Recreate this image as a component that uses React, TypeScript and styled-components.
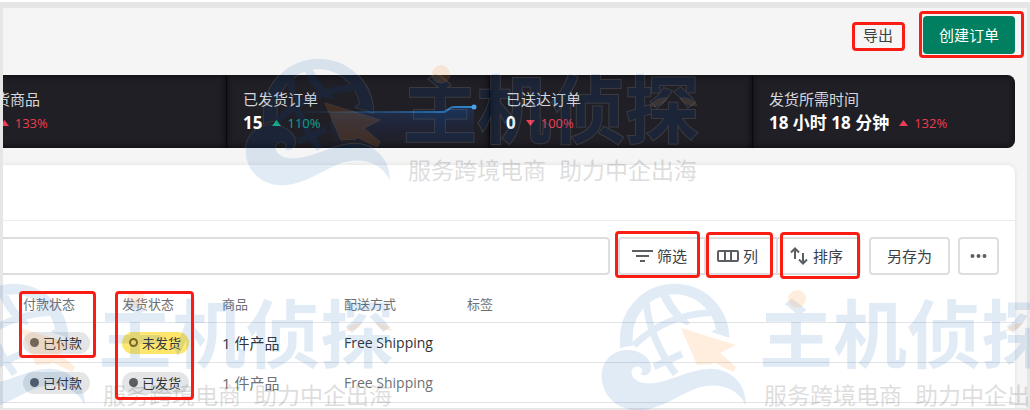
import React from "react";
import styled, { createGlobalStyle } from "styled-components";

const GlobalStyle = createGlobalStyle`
  *, *::before, *::after { box-sizing: border-box; }
  body {
    margin: 0;
    background: #fff;
    color: #3c4043;
    font: 15px/20px "Open Sans", "Noto Sans CJK SC", sans-serif;
  }
  button, input { font: inherit; color: inherit; }
`;

const Page = styled.div`
  position: relative;
  padding-top: 2px;
  overflow: hidden;
`;

const Frame = styled.main`
  border: solid #e6e6e6;
  border-width: 6px 3px 2px;
  padding: 0 12px 0 0;
  background: #f5f5f5;
  overflow: hidden;
`;

const Header = styled.header`
  display: flex;
  justify-content: flex-end;
  align-items: center;
  gap: 16px;
  height: 67px;
  padding-bottom: 13px;
`;

const Marked = styled.div`
  position: relative;
  display: flex;
`;

const Mark = styled.span<{ $inset: string }>`
  position: absolute;
  z-index: 2;
  inset: ${(p) => p.$inset};
  border: 3px solid #fb1d14;
  border-radius: 4px;
  pointer-events: none;
`;

const PlainButton = styled.button`
  height: 38px;
  padding: 0 14px;
  border: 0;
  background: none;
`;

const PrimaryButton = styled.button`
  height: 38px;
  padding: 0 16px;
  border: 0;
  border-radius: 4px;
  background: #008060;
  color: #fff;
`;

const Stats = styled.section`
  display: flex;
  margin-left: -40px;
  height: 73px;
  border-radius: 8px;
  background: #201f26;
  overflow: hidden;
`;

const Stat = styled.div`
  position: relative;
  flex: 1;
  padding: 14px 0 0 17px;
  box-shadow: inset 0 0 7px #08080b, inset 1px 0 0 #0c0c10;
  color: #d6d6da;
  white-space: nowrap;
`;

const StatLine = styled.div`
  display: flex;
  align-items: center;
  height: 28px;
`;

const StatValue = styled.strong`
  font-size: 17px;
  color: #fff;
`;

const Change = styled.span<{ $tone: string }>`
  display: flex;
  align-items: center;
  gap: 6px;
  margin-left: 10px;
  font-size: 13px;
  color: ${(p) => p.$tone};
`;

const Spark = styled.svg`
  position: absolute;
  right: 8px;
  top: 26px;
`;

const Card = styled.section`
  margin-top: 17px;
  border-radius: 0 8px 0 0;
  background: #fff;
  box-shadow: 0 0 4px rgba(0, 0, 0, 0.1);
`;

const Tabs = styled.div`
  height: 56px;
  border-bottom: 1px solid #ececee;
`;

const Toolbar = styled.div`
  display: flex;
  gap: 8px;
  padding: 16px 16px 11px 0;
`;

const Search = styled.input`
  flex: 1;
  min-width: 0;
  height: 38px;
  margin-left: -4px;
  padding: 0 12px;
  border: 2px solid #dcdee0;
  border-radius: 4px;
  background: #fff;
`;

const Group = styled.div`
  display: flex;
  border: 2px solid #dcdee0;
  border-radius: 4px;
`;

const Segment = styled.button<{ $pad: string }>`
  display: flex;
  align-items: center;
  gap: 4px;
  height: 34px;
  padding: ${(p) => p.$pad};
  border: 0;
  background: none;
`;

const Divided = styled(Marked)`
  border-left: 2px solid #dcdee0;
`;

const Outline = styled.button<{ $pad: number }>`
  display: flex;
  align-items: center;
  height: 38px;
  padding: 0 ${(p) => p.$pad}px;
  border: 2px solid #dcdee0;
  border-radius: 4px;
  background: #fff;
`;

const Table = styled.table`
  width: 100%;
  table-layout: fixed;
  border-collapse: separate;
  border-spacing: 0;
  padding-bottom: 5px;
`;

const Head = styled.th<{ $w?: number }>`
  position: relative;
  width: ${(p) => (p.$w ? `${p.$w}px` : "auto")};
  height: 36px;
  padding: 0;
  font-size: 13px;
  font-weight: 400;
  text-align: left;
  color: #6d7175;
  &:first-child { padding-left: 20px; }
`;

const Row = styled.tr<{ $read?: boolean }>`
  color: ${(p) => (p.$read ? "#6d7175" : "#2f3337")};
`;

const Cell = styled.td`
  height: 40px;
  padding: 0;
  border-top: 1px solid #e1e3e5;
  &:first-child { padding-left: 20px; }
`;

const MethodCell = styled(Cell)`
  font-size: 14px;
`;

const LastLine = styled(Cell)`
  height: 1px;
`;

const Badge = styled.span<{ $warn?: boolean }>`
  display: inline-flex;
  align-items: center;
  gap: 4px;
  height: 22px;
  padding: 0 8px 0 7px;
  border-radius: 11px;
  background: ${(p) => (p.$warn ? "#ffe66b" : "#e4e5e7")};
  font-size: 13px;
  color: #303336;
  vertical-align: middle;
  &::before {
    content: "";
    width: 9px;
    height: 9px;
    border: ${(p) => (p.$warn ? "2px solid #8a6a10" : "0")};
    border-radius: 50%;
    background: ${(p) => (p.$warn ? "none" : "#5c5f62")};
  }
`;

const Stamp = styled.svg<{ $x: number; $y: number }>`
  position: absolute;
  z-index: 1;
  left: ${(p) => p.$x}px;
  top: ${(p) => p.$y}px;
  pointer-events: none;
`;

const Caption = styled.text`
  font: 400 23px "Noto Sans CJK SC", sans-serif;
`;

const Wordmark = styled.text`
  font: 700 74px "Noto Sans CJK SC", sans-serif;
`;

function Watermark({ x, y }: { x: number; y: number }) {
  return (
    <Stamp $x={x} $y={y} width="480" height="135" viewBox="0 0 480 135" aria-hidden="true">
      <g opacity="0.115" fill="#0056b8" stroke="#fff" strokeWidth="2" paintOrder="stroke">
        <svg width="155" height="135" viewBox="18 30 465 405">
          <g strokeWidth="5" paintOrder="stroke">
            <path d="M90 235V207A164 164 0 0 1 418 203L365 186Q368 180 378 178A126 126 0 0 0 128 207V228Q106 228 90 235Z" />
            <g fill="none" stroke="#0056b8">
              <path d="M132 226Q225 135 362 128" strokeWidth="20" />
              <path d="M168 94Q178 205 257 312" strokeWidth="21" />
              <path d="M192 290L276 252" strokeWidth="21" />
            </g>
            <path d="M210 76H238Q260 122 300 158L292 166L262 152Q228 120 210 76Z" stroke="none" />
            <path d="M108 240C150 238 183 265 183 290C183 313 165 322 152 312C166 298 148 284 134 291C116 300 123 332 158 338C220 350 290 297 360 296C430 296 470 350 467 405C440 350 380 335 320 355C260 378 210 420 145 421C75 420 35 370 35 318C35 275 65 242 108 240Z" />
          </g>
        </svg>
        <Wordmark x="163" y="82">主机侦探</Wordmark>
      </g>
      <g opacity="0.14" fill="#ff8c1e" stroke="#fff" strokeWidth="1" paintOrder="stroke">
        <path d="M85 48L140 65L124 73L140 87L137 92L117 82L116 84L101 85Z" />
        <circle cx="201" cy="19" r="9" />
        <path d="M410 51Q416 42 427 43Q422 52 410 51Z" />
        <path d="M440 43Q451 42 457 50Q446 52 440 43Z" />
      </g>
      <g fill="#000" opacity="0.13">
        <Caption x="168" y="124">服务跨境电商</Caption>
        <Caption x="319" y="124">助力中企出海</Caption>
      </g>
    </Stamp>
  );
}

const RED = "#ee3d52";
const GREEN = "#10a58a";

interface StatData {
  title: string;
  value: string;
  change: string;
  down?: boolean;
  tone: string;
  chart?: boolean;
}

const stats: StatData[] = [
  { title: "退货商品", value: "1", change: "133%", tone: RED },
  { title: "已发货订单", value: "15", change: "110%", tone: GREEN, chart: true },
  { title: "已送达订单", value: "0", change: "100%", down: true, tone: RED },
  { title: "发货所需时间", value: "18 小时 18 分钟", change: "132%", tone: RED },
];

function Sparkline() {
  return (
    <Spark width="180" height="46" viewBox="0 0 180 46" aria-hidden="true">
      <defs>
        <linearGradient id="line" gradientUnits="userSpaceOnUse" x1="0" y1="0" x2="165" y2="0">
          <stop offset="0" stopColor="#1c3a5c" stopOpacity="0.2" />
          <stop offset="1" stopColor="#2f84cc" />
        </linearGradient>
        <linearGradient id="area" x1="0" y1="0" x2="0" y2="1">
          <stop offset="0" stopColor="#1d4680" stopOpacity="0.45" />
          <stop offset="1" stopColor="#1d2a60" stopOpacity="0" />
        </linearGradient>
      </defs>
      <path d="M30 11H144Q148 6 152 6H173V44H30Z" fill="url(#area)" />
      <path d="M2 11H142C147 11 147 6 153 6H173" fill="none" stroke="url(#line)" strokeWidth="2" />
      <circle cx="173" cy="6" r="2.5" fill="#4aa5ea" />
    </Spark>
  );
}

export default function App() {
  return (
    <Page>
      <GlobalStyle />
      <Frame>
        <Header>
          <Marked>
            <PlainButton type="button">导出</PlainButton>
            <Mark $inset="6px 2px 3px 3px" />
          </Marked>
          <Marked>
            <PrimaryButton type="button">创建订单</PrimaryButton>
            <Mark $inset="-5px -9px -4px -4px" />
          </Marked>
        </Header>

        <Stats>
          {stats.map((s) => (
            <Stat key={s.title}>
              {s.chart && <Sparkline />}
              <div>{s.title}</div>
              <StatLine>
                <StatValue>{s.value}</StatValue>
                <Change $tone={s.tone}>
                  <svg width="9" height="6" viewBox="0 0 9 6" fill="currentColor" aria-hidden="true">
                    <path d={s.down ? "M0 0H9L4.5 6Z" : "M0 6H9L4.5 0Z"} />
                  </svg>
                  {s.change}
                </Change>
              </StatLine>
            </Stat>
          ))}
        </Stats>

        <Card>
          <Tabs />
          <Toolbar>
            <Search type="search" aria-label="搜索" />
            <Group>
              <Marked>
                <Segment type="button" $pad="0 17px 0 12px">
                  <svg width="21" height="14" viewBox="0 0 21 14" fill="none" stroke="#5c5f62" strokeWidth="2" aria-hidden="true">
                    <path d="M0 2H21M4 7H17M8 12H13" />
                  </svg>
                  筛选
                </Segment>
                <Mark $inset="-8px 4px -5px -5px" />
              </Marked>
              <Divided>
                <Segment type="button" $pad="0 18px 0 11px">
                  <svg width="22" height="14" viewBox="0 0 22 14" fill="none" stroke="#5c5f62" strokeWidth="2" aria-hidden="true">
                    <rect x="1" y="2" width="20" height="10" rx="1" />
                    <path d="M8 2V12M14 2V12" />
                  </svg>
                  列
                </Segment>
                <Mark $inset="-7px 3px -5px 0" />
              </Divided>
              <Divided>
                <Segment type="button" $pad="0 16px 0 12px">
                  <svg width="19" height="18" viewBox="0 0 19 18" fill="none" stroke="#5c5f62" strokeWidth="2" aria-hidden="true">
                    <path d="M5 12V2M1 5.500L5 1.500L9 5.500M13 6V16M9 12.500L13 16.500L17 12.500" />
                  </svg>
                  排序
                </Segment>
                <Mark $inset="-7px -1px -6px 2px" />
              </Divided>
            </Group>
            <Outline type="button" $pad={16}>另存为</Outline>
            <Outline type="button" $pad={10} aria-label="更多">
              <svg width="17" height="6" viewBox="0 0 17 6" fill="#5c5f62" aria-hidden="true">
                <circle cx="2.5" cy="3" r="2" />
                <circle cx="8.5" cy="3" r="2" />
                <circle cx="14.5" cy="3" r="2" />
              </svg>
            </Outline>
          </Toolbar>

          <Table>
            <thead>
              <tr>
                <Head $w={119}>
                  付款状态
                  <Mark $inset="5px 26px -36px 16px" />
                </Head>
                <Head $w={100}>
                  发货状态
                  <Mark $inset="5px 28px -78px -7px" />
                </Head>
                <Head $w={122}>商品</Head>
                <Head $w={123}>配送方式</Head>
                <Head>标签</Head>
              </tr>
            </thead>
            <tbody>
              <Row>
                <Cell><Badge>已付款</Badge></Cell>
                <Cell><Badge $warn>未发货</Badge></Cell>
                <Cell>1 件产品</Cell>
                <MethodCell>Free Shipping</MethodCell>
                <Cell />
              </Row>
              <Row $read>
                <Cell><Badge>已付款</Badge></Cell>
                <Cell><Badge>已发货</Badge></Cell>
                <Cell>1 件产品</Cell>
                <MethodCell>Free Shipping</MethodCell>
                <Cell />
              </Row>
              <tr>
                <LastLine colSpan={5} />
              </tr>
            </tbody>
          </Table>
        </Card>
      </Frame>

      <Watermark x={240} y={55} />
      <Watermark x={-65} y={280} />
      <Watermark x={596} y={280} />
    </Page>
  );
}
